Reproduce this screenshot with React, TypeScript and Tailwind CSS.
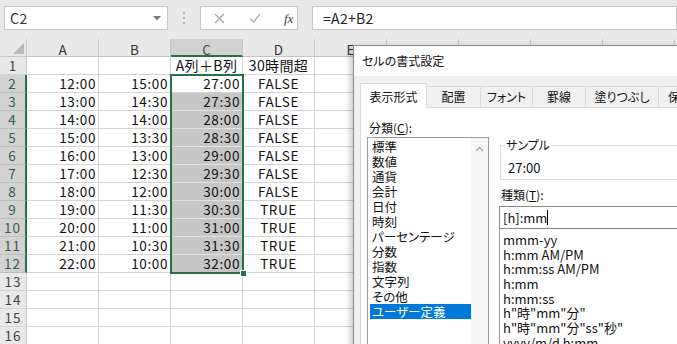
import React from "react";

const data: [string, string, string, string][] = [
  ["12:00", "15:00", "27:00", "FALSE"],
  ["13:00", "14:30", "27:30", "FALSE"],
  ["14:00", "14:00", "28:00", "FALSE"],
  ["15:00", "13:30", "28:30", "FALSE"],
  ["16:00", "13:00", "29:00", "FALSE"],
  ["17:00", "12:30", "29:30", "FALSE"],
  ["18:00", "12:00", "30:00", "FALSE"],
  ["19:00", "11:30", "30:30", "TRUE"],
  ["20:00", "11:00", "31:00", "TRUE"],
  ["21:00", "10:30", "31:30", "TRUE"],
  ["22:00", "10:00", "32:00", "TRUE"],
];

const cols = ["A", "B", "C", "D", "E", "F", "G", "H", "I", "J"];

function Toolbar() {
  return (
    <div className="h-[39px] bg-[#e9e9e9] flex items-start pt-[6px] pl-[4px]">
      <div className="w-[164px] h-[24px] shrink-0 bg-white border border-[#c6c6c6] flex items-center justify-between pl-[5px] pr-[6px]">
        <span className="text-[14px] tracking-[0.5px] text-[#333]">C2</span>
        <svg width="8" height="5" viewBox="0 0 8 5">
          <polygon points="0,0 8,0 4,4.5" fill="#7a7a7a" />
        </svg>
      </div>
      <div className="w-[32px] h-[24px] shrink-0 flex flex-col items-center justify-center gap-[3px]">
        <div className="w-[2px] h-[2px] bg-[#b4b4b4]" />
        <div className="w-[2px] h-[2px] bg-[#b4b4b4]" />
        <div className="w-[2px] h-[2px] bg-[#b4b4b4]" />
      </div>
      <div className="w-[98px] h-[24px] shrink-0 bg-white border border-[#c6c6c6] flex items-center pl-[13px]">
        <svg width="11" height="11" viewBox="0 0 11 11">
          <path d="M1 1 L10 10 M10 1 L1 10" stroke="#a8a8a8" strokeWidth="1.3" />
        </svg>
        <svg width="12" height="10" viewBox="0 0 12 10" className="ml-[24px]">
          <path d="M1 5.5 L4.5 9 L11 1" stroke="#b0b0b0" strokeWidth="1.4" fill="none" />
        </svg>
        <span className="ml-[23px] text-[13px] italic text-[#3a3a3a] font-['Liberation_Serif',serif] leading-none">
          fx
        </span>
      </div>
      <div className="ml-[14px] flex-1 h-[24px] bg-white border border-[#c6c6c6] flex items-center pl-[10px]">
        <span className="text-[14px] tracking-[0.3px] text-[#222]">=A2+B2</span>
      </div>
    </div>
  );
}

function HeaderRow() {
  return (
    <div className="flex h-[18px]">
      <div className="w-[27px] shrink-0 h-[18px] bg-[#e9e9e9] border-r border-b border-[#c6c6c6] flex items-end justify-end pr-[2px] pb-[2px]">
        <svg width="11" height="11" viewBox="0 0 11 11">
          <polygon points="11,0 11,11 0,11" fill="#b9b9b9" />
        </svg>
      </div>
      {cols.map((c) => (
        <div
          key={c}
          className={
            c === "C"
              ? "w-[72px] shrink-0 h-[18px] bg-[#d2d2d2] border-r border-r-[#c6c6c6] border-b-2 border-b-[#217346] flex items-center justify-center pt-[4px] text-[13.5px] leading-[12px] text-[#2f4f40]"
              : "w-[72px] shrink-0 h-[18px] bg-[#e9e9e9] border-r border-b border-[#c6c6c6] flex items-center justify-center pt-[4px] text-[13.5px] leading-[13px] text-[#333]"
          }
        >
          {c}
        </div>
      ))}
    </div>
  );
}

function Row({ n }: { n: number }) {
  const sel = n >= 2 && n <= 12;
  const d = n >= 2 && n <= 12 ? data[n - 2] : null;
  const c1 = n === 1;
  return (
    <div className="flex h-[18px]">
      <div
        className={
          sel
            ? "w-[27px] shrink-0 h-[18px] bg-[#d2d2d2] border-r-2 border-r-[#217346] border-b border-b-[#bdbdbd] flex items-center justify-center text-[13.5px] tracking-[1px] leading-[17px] text-[#3a5a4a]"
            : "w-[27px] shrink-0 h-[18px] bg-[#e9e9e9] border-r border-r-[#c6c6c6] border-b border-b-[#d4d4d4] flex items-center justify-center text-[13.5px] tracking-[1px] leading-[17px] text-[#444]"
        }
      >
        {n}
      </div>
      {cols.map((c, i) => {
        let text = "";
        let align = "text-right pr-[2px] text-[13.5px] tracking-[0.6px]";
        if (d && i < 4) {
          text = d[i];
          if (i === 3) align = "text-center text-[13.5px] tracking-[0.6px]";
        }
        if (c1 && i === 2) {
          text = "A列＋B列";
          align = "text-center text-[14px] tracking-[0.4px]";
        }
        if (c1 && i === 3) {
          text = "30時間超";
          align = "text-center text-[14px] tracking-[0.4px]";
        }
        const shaded = i === 2 && n >= 3 && n <= 12;
        return (
          <div
            key={c}
            className={
              (shaded
                ? "bg-[#c6c6c6] border-r border-b border-[#e2e2e2] "
                : "bg-white border-r border-b border-[#d4d4d4] ") +
              "w-[72px] shrink-0 h-[18px] leading-[17px] text-[#111] whitespace-nowrap " +
              align
            }
          >
            {text}
          </div>
        );
      })}
    </div>
  );
}

function Sheet() {
  const nums = Array.from({ length: 17 }, (_, i) => i + 1);
  return (
    <div className="relative">
      <HeaderRow />
      {nums.map((n) => (
        <Row key={n} n={n} />
      ))}
      {/* selection border */}
      <div className="absolute left-[170px] top-[35px] w-[74px] h-[200px] border-2 border-[#217346] pointer-events-none" />
      {/* fill handle */}
      <div className="absolute left-[240px] top-[231px] w-[7px] h-[7px] bg-[#217346] border border-white" />
    </div>
  );
}

const categories = [
  "標準",
  "数値",
  "通貨",
  "会計",
  "日付",
  "時刻",
  "パーセンテージ",
  "分数",
  "指数",
  "文字列",
  "その他",
  "ユーザー定義",
];

const types = [
  "mmm-yy",
  "h:mm AM/PM",
  "h:mm:ss AM/PM",
  "h:mm",
  "h:mm:ss",
  'h"時"mm"分"',
  'h"時"mm"分"ss"秒"',
  "yyyy/m/d h:mm",
];

function Dialog() {
  return (
    <div className="absolute left-[353px] top-[45px] w-[380px] h-[420px] bg-[#f0f0f0] border border-[#8a8a8a] shadow-[-3px_2px_6px_rgba(0,0,0,0.2)] flex flex-col text-[#111] [font-feature-settings:'palt']">
      <div className="h-[30px] shrink-0 bg-white pl-[8px] flex items-center text-[12px]">
        セルの書式設定
      </div>
      <div className="flex-1 pl-[6px] pt-[7px] flex flex-col">
        <div className="h-[24px] shrink-0 flex items-end text-[12px]">
          <div className="w-[67px] shrink-0 h-[25px] -mb-[1px] relative z-10 bg-white border border-b-0 border-[#d9d9d9] flex items-center justify-center pt-[1px]">
            表示形式
          </div>
          <div className="w-[54px] shrink-0 h-[21px] border-t border-r border-[#d9d9d9] flex items-center justify-center">
            配置
          </div>
          <div className="w-[52px] shrink-0 h-[21px] border-t border-r border-[#d9d9d9] flex items-center justify-center">
            フォント
          </div>
          <div className="w-[53px] shrink-0 h-[21px] border-t border-r border-[#d9d9d9] flex items-center justify-center">
            罫線
          </div>
          <div className="w-[73px] shrink-0 h-[21px] border-t border-r border-[#d9d9d9] flex items-center justify-center">
            塗りつぶし
          </div>
          <div className="w-[54px] shrink-0 h-[21px] border-t border-r border-[#d9d9d9] flex items-center pl-[9px]">
            保護
          </div>
        </div>
        <div className="flex-1 bg-white border border-[#d9d9d9] flex items-start">
          <div className="pl-[6px] pt-[12px] flex flex-col shrink-0">
            <div className="ml-[2px] h-[16px] leading-[16px] text-[12px]">
              分類(<span className="underline">C</span>):
            </div>
            <div className="mt-[1px] w-[122px] h-[220px] border border-[#9a9a9a] flex">
              <div className="w-[103px] pl-[2px] pt-[1px] flex flex-col">
                {categories.map((c) => (
                  <div
                    key={c}
                    className={
                      c === "ユーザー定義"
                        ? "h-[15px] leading-[15px] pl-[2px] text-[12.5px] bg-[#0078d7] text-white whitespace-nowrap"
                        : "h-[15px] leading-[15px] pl-[2px] text-[12.5px] whitespace-nowrap"
                    }
                  >
                    {c}
                  </div>
                ))}
              </div>
              <div className="flex-1 bg-[#f7f7f7] flex justify-center pt-[8px]">
                <svg width="9" height="6" viewBox="0 0 9 6">
                  <path d="M1 5 L4.5 1.5 L8 5" stroke="#a6a6a6" strokeWidth="1.3" fill="none" />
                </svg>
              </div>
            </div>
          </div>
          <div className="ml-[10px] pt-[29px] flex-1 flex flex-col">
            <fieldset className="ml-[1px] border border-[#dcdcdc] px-[7px] pt-[7px] pb-[3px]">
              <legend className="-ml-[3px] px-[1px] h-[16px] leading-[16px] text-[12px]">
                サンプル
              </legend>
              <div className="h-[16px] leading-[16px] text-[13px]">27:00</div>
            </fieldset>
            <div className="mt-[7px] ml-[2px] h-[16px] leading-[16px] text-[12px]">
              種類(<span className="underline">T</span>):
            </div>
            <div className="mt-[3px] h-[23px] border border-[#8a8a8a] flex items-center pl-[3px] text-[13px]">
              <span>[h]:mm</span>
              <span className="w-[1px] h-[15px] bg-black" />
            </div>
            <div className="h-[140px] border border-t-0 border-[#9a9a9a] pl-[3px] pt-[4px] flex flex-col">
              {types.map((t) => (
                <div key={t} className="h-[14.7px] leading-[14.7px] text-[13px] whitespace-nowrap">
                  {t}
                </div>
              ))}
            </div>
          </div>
        </div>
      </div>
    </div>
  );
}

export default function App() {
  return (
    <div className="relative w-[677px] h-[344px] overflow-hidden bg-white font-['Noto_Sans_CJK_JP',sans-serif]">
      <Toolbar />
      <Sheet />
      <Dialog />
    </div>
  );
}
